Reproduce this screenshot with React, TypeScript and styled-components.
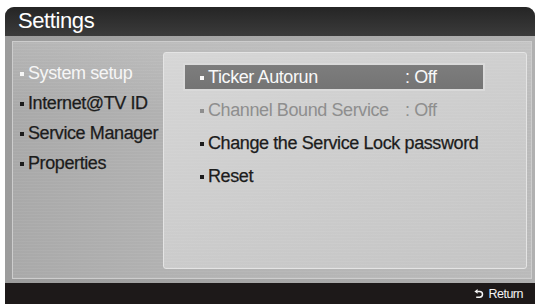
import styled, { createGlobalStyle } from 'styled-components';

const GlobalStyle = createGlobalStyle`
    html, body {
        margin: 0;
        padding: 0;
        background: #ffffff;
    }

    body {
        font-family: "Liberation Sans", Arial, sans-serif;
    }
`;

const Screen = styled.div`
    width: 537px;
    height: 304px;
    padding: 7px 2px 0 5px;
    box-sizing: border-box;
`;

const Frame = styled.div`
    display: flex;
    flex-direction: column;
    height: 100%;
    border-radius: 9px 9px 0 0;
    overflow: hidden;
    background: linear-gradient(90deg, #9c9c9c, #a8a8a8 50%, #b0b0b0);
`;

const TitleBar = styled.header`
    flex: none;
    height: 29px;
    padding-left: 13px;
    background: linear-gradient(#252525, #3b3b3b);
    color: #ffffff;
    font-size: 22px;
    letter-spacing: -0.4px;
    line-height: 27px;
`;

const Body = styled.div`
    flex: 1;
    display: flex;
    padding: 5px 3px 4px 7px;
    min-height: 0;
`;

const Panel = styled.div`
    flex: 1;
    display: flex;
    border: 1px solid #cdcdcd;
    background:
        repeating-linear-gradient(0deg, rgba(255, 255, 255, 0.05) 0 1px, transparent 1px 3px),
        linear-gradient(rgba(255, 255, 255, 0.14), transparent 30%),
        linear-gradient(90deg, #a9a9a9, #b1b1b1 28%, #bababa);
`;

const SideMenu = styled.ul`
    flex: none;
    width: 149px;
    margin: 0;
    padding: 16px 0 0 7px;
    box-sizing: border-box;
    list-style: none;
`;

const SideItem = styled.li<{ $active?: boolean }>`
    font-size: 18px;
    letter-spacing: -0.4px;
    line-height: 30px;
    white-space: nowrap;
    color: ${({ $active }) => ($active ? '#f6f6f6' : '#1c1c1c')};
    -webkit-text-stroke: ${({ $active }) => ($active ? '0' : '0.25px')};
`;

const Bullet = styled.span`
    display: inline-block;
    width: 4px;
    height: 4px;
    margin-right: 4px;
    vertical-align: middle;
    background: currentColor;
`;

const Content = styled.div`
    flex: 1;
    display: flex;
    padding: 10px 4px 9px 1px;
`;

const OptionBox = styled.div`
    flex: 1;
    display: flex;
    flex-direction: column;
    gap: 5px;
    padding: 10px 0 0 19px;
    border: 1px solid #e4e4e4;
    border-radius: 3px;
    background:
        repeating-linear-gradient(0deg, rgba(255, 255, 255, 0.05) 0 1px, transparent 1px 3px),
        linear-gradient(160deg, #d6d6d6, #cccccc 55%, #c4c4c4);
`;

const OptionRow = styled.div<{ $selected?: boolean; $disabled?: boolean }>`
    display: flex;
    width: 302px;
    height: 28px;
    box-sizing: border-box;
    padding-left: 15px;
    border: 2px solid ${({ $selected }) => ($selected ? '#dadada' : 'transparent')};
    background: ${({ $selected }) => ($selected ? 'linear-gradient(#7d7d7d, #747474)' : 'transparent')};
    font-size: 18px;
    letter-spacing: -0.4px;
    line-height: 24px;
    white-space: nowrap;
    color: ${({ $selected, $disabled }) =>
        $selected ? '#f8f8f8' : $disabled ? '#8e8e8e' : '#1c1c1c'};
    -webkit-text-stroke: ${({ $selected, $disabled }) => ($selected || $disabled ? '0' : '0.25px')};
`;

const OptionLabel = styled.span<{ $hasValue?: boolean }>`
    display: inline-block;
    width: ${({ $hasValue }) => ($hasValue ? '205px' : 'auto')};
`;

const Footer = styled.footer`
    flex: none;
    height: 21px;
    display: flex;
    justify-content: flex-end;
    align-items: center;
    gap: 4px;
    padding-right: 12px;
    background: #1d1919;
    color: #f4f4f4;
    font-size: 12.5px;
    letter-spacing: -0.5px;
`;

const ReturnIcon = () => (
    <svg width="10" height="10" viewBox="0 0 10 10">
        <path d="M3.2 2.4 H5.6 A2.9 2.9 0 0 1 5.6 8.2 H2.2" fill="none" stroke="#f4f4f4" strokeWidth="1.5" />
        <polygon points="0.4,2.4 3.6,0 3.6,4.8" fill="#f4f4f4" />
    </svg>
);

const sideItems = ['System setup', 'Internet@TV ID', 'Service Manager', 'Properties'];

const options = [
    { label: 'Ticker Autorun', value: ': Off', selected: true },
    { label: 'Channel Bound Service', value: ': Off', disabled: true },
    { label: 'Change the Service Lock password' },
    { label: 'Reset' },
];

const App = () => {
    return (
        <>
            <GlobalStyle />
            <Screen>
                <Frame>
                    <TitleBar>Settings</TitleBar>
                    <Body>
                        <Panel>
                            <SideMenu>
                                {sideItems.map((item, i) => (
                                    <SideItem key={item} $active={i === 0}>
                                        <Bullet />
                                        {item}
                                    </SideItem>
                                ))}
                            </SideMenu>
                            <Content>
                                <OptionBox>
                                    {options.map((opt) => (
                                        <OptionRow key={opt.label} $selected={opt.selected} $disabled={opt.disabled}>
                                            <OptionLabel $hasValue={!!opt.value}>
                                                <Bullet />
                                                {opt.label}
                                            </OptionLabel>
                                            {opt.value && <span>{opt.value}</span>}
                                        </OptionRow>
                                    ))}
                                </OptionBox>
                            </Content>
                        </Panel>
                    </Body>
                    <Footer>
                        <ReturnIcon />
                        Return
                    </Footer>
                </Frame>
            </Screen>
        </>
    );
};

export default App;
